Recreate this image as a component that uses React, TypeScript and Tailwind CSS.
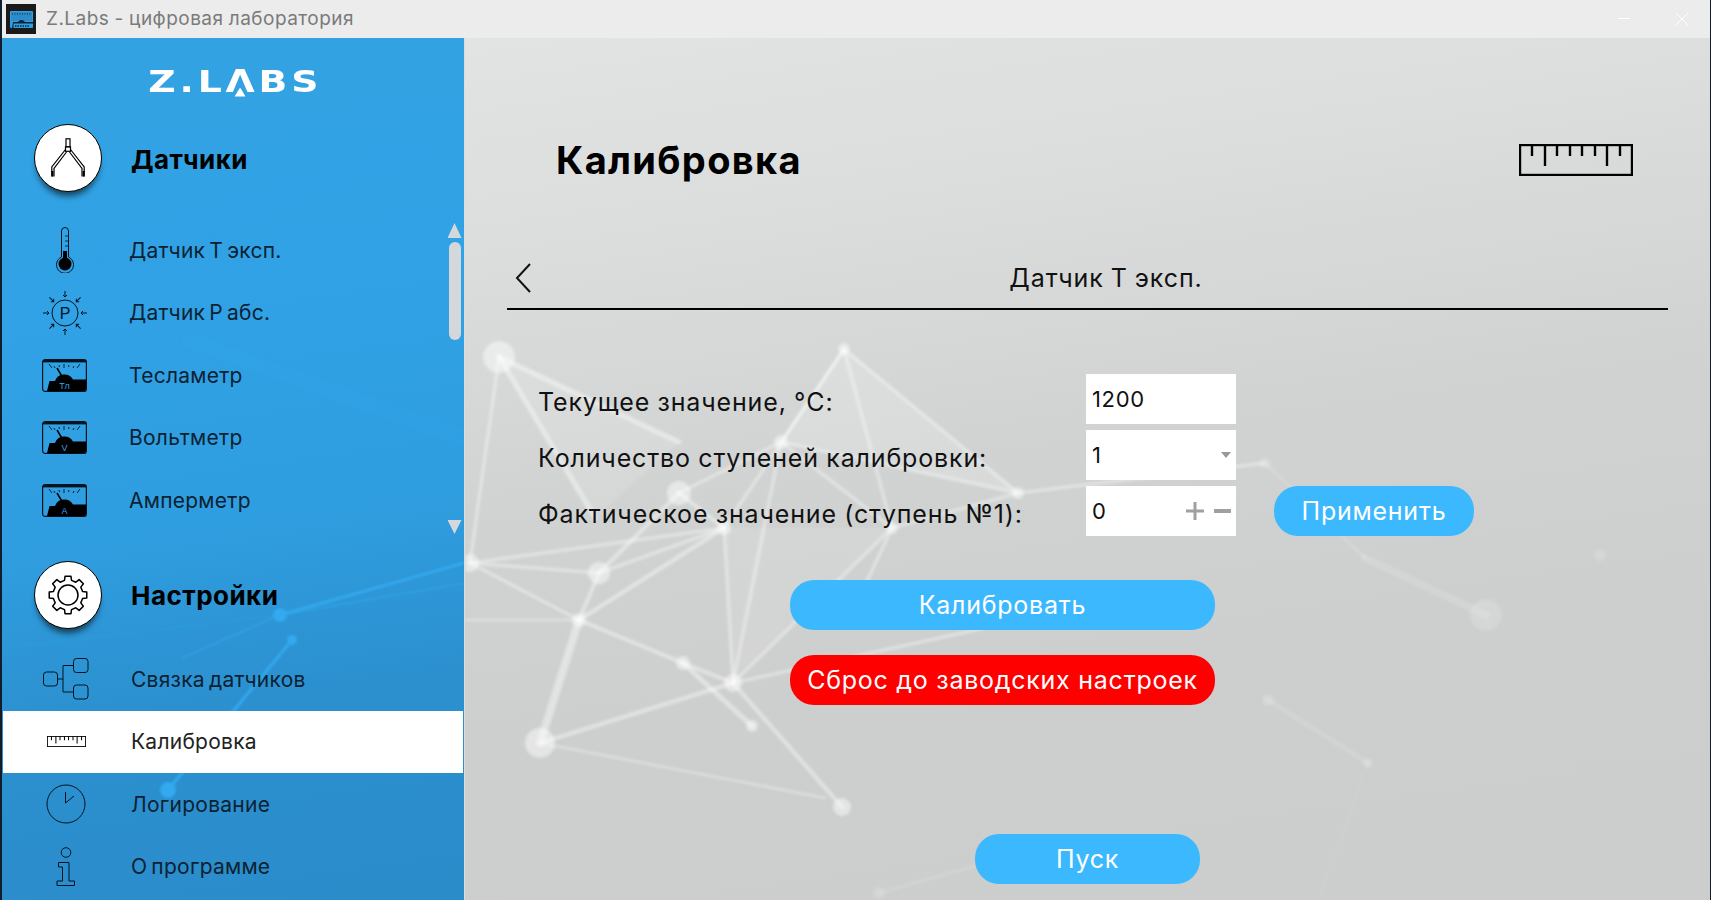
import type { ReactNode } from 'react'

// ---- icons ----

function Ruler({ className, sw = 2.4 }: { className?: string; sw?: number }) {
  const short = [13, 38, 51, 63, 76, 101]
  const long = [26, 88]
  return (
    <svg viewBox="0 0 114 32" className={className} fill="none" stroke="#000" strokeWidth={sw}>
      <rect x="1" y="1" width="112" height="30" />
      {short.map((x) => (
        <line key={x} x1={x} y1="1" x2={x} y2="12" />
      ))}
      {long.map((x) => (
        <line key={x} x1={x} y1="1" x2={x} y2="22" />
      ))}
    </svg>
  )
}

function Meter({ letter }: { letter: string }) {
  const ticks = [
    [7, 5, 10, 9],
    [12, 7, 13, 9],
    [17, 6, 17.5, 8],
    [22, 5, 22, 9],
    [27, 6, 26.5, 8],
    [32, 7, 31, 9],
    [38, 5, 35, 9],
  ]
  return (
    <svg viewBox="0 0 45 33" className="w-[45px] h-[33px]">
      <rect x="0.6" y="0.6" width="43.8" height="31.8" rx="2.5" fill="none" stroke="#04141f" strokeWidth="1.2" />
      <rect x="1" y="1" width="43" height="2.4" fill="#04141f" />
      <path d="M5 32 L7.5 22 H13 A10 10 0 0 1 31 20.5 H44 V30 Q44 32 42 32 Z" fill="#000" />
      {ticks.map(([a, b, c, d], i) => (
        <line key={i} x1={a} y1={b} x2={c} y2={d} stroke="#04141f" strokeWidth="0.9" />
      ))}
      <path d="M15 9 L21 19" stroke="#000" strokeWidth="1.5" />
      <text x="22.5" y="30" textAnchor="middle" fill="#35a5e8" fontSize="9" fontFamily="Liberation Sans, sans-serif">
        {letter}
      </text>
    </svg>
  )
}

function Thermometer() {
  return (
    <svg viewBox="0 0 20 46" className="w-[20px] h-[46px]" fill="none" stroke="#04141f">
      <path d="M6.5 30 V4 A3.5 3.5 0 0 1 13.5 4 V30 A8.5 8.5 0 1 1 6.5 30 Z" strokeWidth="1" />
      <circle cx="10" cy="37" r="6.5" fill="#000" stroke="none" />
      <rect x="8" y="24" width="4" height="10" fill="#000" stroke="none" />
      <path d="M10 9 H13 M10 14 H13 M10 19 H13" strokeWidth="0.8" />
    </svg>
  )
}

function Pressure() {
  const dirs = [0, 45, 90, 135, 180, 225, 270, 315]
  return (
    <svg viewBox="-23 -23 46 46" className="w-[46px] h-[46px]" fill="none" stroke="#04141f" strokeWidth="1">
      <circle r="13" />
      {dirs.map((d) => (
        <g key={d} transform={`rotate(${d})`}>
          <path d="M0 -22 V-16 M-2 -18 L0 -16 L2 -18" />
        </g>
      ))}
      <text y="6" textAnchor="middle" fontSize="16" fill="#04141f" stroke="none" fontFamily="Liberation Sans, sans-serif">
        P
      </text>
    </svg>
  )
}

function Compass() {
  return (
    <svg viewBox="0 0 34 40" className="w-[34px] h-[40px]" fill="none" stroke="#000" strokeWidth="1.2">
      <rect x="15" y="0.8" width="4" height="8" />
      <rect x="14.5" y="8.8" width="5" height="4.5" />
      <path d="M14.5 11.5 L0.8 29 V38.5 M15.5 14 L3 30.5 V38.5" />
      <path d="M19.5 11.5 L33.2 29 V38.5 M18.5 14 L31 30.5 V38.5" />
      <path d="M1.4 33 V38.5 M32.6 33 V38.5" strokeWidth="2" />
    </svg>
  )
}

function gearPath() {
  const teeth = 8
  const pts: string[] = []
  for (let i = 0; i < teeth; i++) {
    const a = (i * 2 * Math.PI) / teeth - Math.PI / 2
    const step = (2 * Math.PI) / teeth
    const seq: [number, number][] = [
      [15, a - step * 0.3],
      [19, a - step * 0.2],
      [19, a + step * 0.2],
      [15, a + step * 0.3],
    ]
    seq.forEach(([r, t]) => pts.push(`${(r * Math.cos(t)).toFixed(2)} ${(r * Math.sin(t)).toFixed(2)}`))
  }
  return 'M' + pts.join(' L') + ' Z'
}

function Gear() {
  return (
    <svg viewBox="-20 -20 40 40" className="w-[40px] h-[40px]" fill="none" stroke="#000" strokeWidth="1.5">
      <path d={gearPath()} strokeLinejoin="round" />
      <circle r="10" />
    </svg>
  )
}

function Flow() {
  return (
    <svg viewBox="0 0 46 42" className="w-[46px] h-[42px]" fill="none" stroke="#04141f" strokeWidth="1">
      <rect x="0.5" y="14" width="14" height="14" rx="3" />
      <rect x="30.5" y="0.5" width="14.5" height="14" rx="3" />
      <rect x="30.5" y="27" width="14.5" height="14" rx="3" />
      <path d="M14.5 21 H20 M20 34 V7.5 H30.5 M20 34 H30.5" />
    </svg>
  )
}

function Clock() {
  return (
    <svg viewBox="0 0 40 40" className="w-[40px] h-[40px]" fill="none" stroke="#04141f" strokeWidth="1">
      <circle cx="20" cy="20" r="19" />
      <path d="M19.5 8 V19 L28 12" />
    </svg>
  )
}

function Info() {
  return (
    <svg viewBox="0 0 20 40" className="w-[20px] h-[40px]" fill="none" stroke="#04141f" strokeWidth="1">
      <circle cx="10" cy="5.5" r="4.8" />
      <path d="M2.5 15.5 H13 V34 H18.5 V38.5 H1 V34 H6.5 V20 H2.5 Z" />
    </svg>
  )
}

function AppIcon() {
  return (
    <div className="w-[30px] h-[30px] bg-[#1a1a1a] flex items-center justify-center">
      <svg viewBox="0 0 23 17" className="w-[23px] h-[17px]">
        <rect x="0" y="0" width="23" height="17" rx="1" fill="#2f9fe2" />
        <rect x="1" y="1" width="21" height="9" fill="#2b8cc9" />
        <path d="M2 3 H21" stroke="#0b2233" strokeDasharray="1 1.5" />
        <path d="M2 17 L3 11 H8 A4 4 0 0 1 15 11 H23 V12.5 H3.5 V17 Z" fill="#0b2233" />
        <path d="M5 15 H19" stroke="#0b2233" strokeDasharray="1.5 1" strokeWidth="1.4" />
      </svg>
    </div>
  )
}

// ---- backgrounds ----

type Pt = [number, number]

// coordinates are screen coordinates minus the panel origin
const mainEdges: [Pt, Pt, number][] = [
  [[34, 319], [214, 404], 5],
  [[34, 319], [5, 525], 3],
  [[34, 319], [130, 480], 5],
  [[379, 311], [316, 404], 3],
  [[379, 311], [553, 455], 3],
  [[379, 311], [427, 490], 3],
  [[379, 311], [259, 490], 3],
  [[316, 404], [553, 455], 3],
  [[316, 404], [214, 455], 3],
  [[316, 404], [427, 490], 3],
  [[214, 455], [259, 490], 4],
  [[214, 455], [134, 535], 4],
  [[553, 455], [427, 490], 3],
  [[553, 455], [800, 425], 3],
  [[259, 490], [5, 525], 3],
  [[259, 490], [134, 535], 3],
  [[259, 490], [268, 645], 3],
  [[259, 490], [114, 582], 4],
  [[316, 404], [268, 645], 3],
  [[427, 490], [268, 645], 3],
  [[427, 490], [380, 590], 3],
  [[5, 525], [134, 535], 3],
  [[5, 525], [114, 582], 3],
  [[134, 535], [114, 582], 4],
  [[114, 582], [218, 625], 4],
  [[114, 582], [-5, 582], 2],
  [[114, 582], [75, 705], 8],
  [[218, 625], [287, 688], 5],
  [[218, 625], [268, 645], 4],
  [[268, 645], [377, 769], 4],
  [[268, 645], [75, 705], 4],
  [[268, 645], [520, 590], 3],
  [[800, 425], [900, 520], 4],
  [[900, 520], [1021, 577], 8],
  [[803, 662], [903, 725], 5],
  [[75, 705], [360, 760], 2],
  [[414, 855], [520, 825], 3],
  [[903, 725], [840, 900], 1],
]
const mainNodes: [number, number, number][] = [
  [34, 319, 16],
  [379, 311, 6],
  [316, 404, 7],
  [214, 455, 12],
  [553, 455, 6],
  [259, 490, 7],
  [427, 490, 6],
  [5, 525, 9],
  [134, 535, 11],
  [114, 582, 7],
  [268, 645, 9],
  [218, 625, 7],
  [287, 688, 6],
  [75, 705, 15],
  [377, 769, 9],
  [414, 855, 6],
  [800, 425, 6],
  [1021, 577, 16],
  [903, 725, 5],
  [803, 662, 6],
  [1135, 517, 6],
]

const isFaint = (x: number, y: number) => x > 700 || y > 800

function MainNetwork() {
  return (
    <svg className="absolute inset-0 w-full h-full blur-[1.4px]" stroke="#fff">
      <polygon points="379,311 316,404 553,455" fill="#fff" fillOpacity="0.18" stroke="none" />
      <polygon points="34,319 214,404 130,480" fill="#fff" fillOpacity="0.12" stroke="none" />
      <polygon points="259,490 268,645 427,490" fill="#fff" fillOpacity="0.1" stroke="none" />
      {mainEdges.map(([a, b, w], i) => (
        <line key={i} x1={a[0]} y1={a[1]} x2={b[0]} y2={b[1]} strokeWidth={w} strokeOpacity={isFaint(a[0], a[1]) ? 0.13 : 0.42} strokeLinecap="round" />
      ))}
      {mainNodes.map(([x, y, r], i) => (
        <circle key={i} cx={x} cy={y} r={r} fill="#fff" stroke="none" fillOpacity={isFaint(x, y) ? 0.16 : 0.46} />
      ))}
    </svg>
  )
}

function SideNetwork() {
  return (
    <svg className="absolute inset-0 w-full h-full blur-[0.8px]" stroke="#33a9ee" fill="#33a9ee">
      <line x1="462" y1="525" x2="278" y2="577" strokeWidth="3" />
      <line x1="278" y1="577" x2="180" y2="620" strokeWidth="2" strokeOpacity="0.5" />
      <line x1="278" y1="577" x2="462" y2="545" strokeWidth="2" strokeOpacity="0.5" />
      <line x1="290" y1="602" x2="166" y2="752" strokeWidth="3" />
      <line x1="278" y1="577" x2="0" y2="610" strokeWidth="1" strokeOpacity="0.4" />
      <line x1="180" y1="300" x2="462" y2="400" strokeWidth="18" strokeOpacity="0.18" />
      <line x1="100" y1="220" x2="462" y2="90" strokeWidth="30" strokeOpacity="0.08" />
      <circle cx="278" cy="577" r="7" stroke="none" />
      <circle cx="290" cy="602" r="5" stroke="none" />
      <circle cx="166" cy="752" r="8" stroke="none" />
    </svg>
  )
}

// ---- sidebar ----

function Row({ icon, label, active, lower }: { icon: ReactNode; label: string; active?: boolean; lower?: boolean }) {
  return (
    <div className={`flex items-center h-[62.5px] pr-2 ${active ? 'bg-white mx-px text-[#222]' : 'text-[#0c2233]'}`}>
      <div className={`flex justify-center pr-[2px] ${active ? 'w-[128px]' : lower ? 'w-[129px]' : 'w-[127px]'}`}>{icon}</div>
      <span className="text-[21px] tracking-[0.012em] [word-spacing:-0.1em]">{label}</span>
    </div>
  )
}

function Header({ icon, label }: { icon: ReactNode; label: string }) {
  return (
    <div className="flex items-center pl-[32px] h-[68px]">
      <div className="w-[68px] h-[68px] rounded-full bg-white border-[1.5px] border-black flex items-center justify-center shadow-[0_7px_6px_-3px_rgba(0,0,0,0.6)]">
        {icon}
      </div>
      <span className="ml-[29px] pt-[2px] text-[26px] font-bold text-black tracking-[0.018em]">{label}</span>
    </div>
  )
}

function Sidebar() {
  return (
    <aside className="relative w-[462px] shrink-0 overflow-hidden flex flex-col bg-[linear-gradient(172deg,#33a2e2_0%,#30a2e5_30%,#2f9ee0_55%,#2c90cf_75%,#2b8cca_100%)]">
      <SideNetwork />
      <div className="relative flex flex-col">
        <div className="h-[86px] flex items-center justify-center pl-[4px]">
          <span className="text-white font-bold text-[31px] leading-none tracking-[0.1em] scale-x-[1.22] font-['DejaVu_Sans',sans-serif]">
            Z.L
            <span className="relative">
              Λ
              <span className="absolute left-[44%] -translate-x-1/2 bottom-[2px] w-[9px] h-[9px] bg-white [clip-path:polygon(50%_0,100%_100%,0_100%)]" />
            </span>
            BS
          </span>
        </div>
        <Header icon={<Compass />} label="Датчики" />
        <div className="flex mt-[27px]">
          <div className="flex-1">
            <Row icon={<Thermometer />} label="Датчик Т эксп." />
            <Row icon={<Pressure />} label="Датчик Р абс." />
            <Row icon={<Meter letter="Tл" />} label="Тесламетр" />
            <Row icon={<Meter letter="V" />} label="Вольтметр" />
            <Row icon={<Meter letter="A" />} label="Амперметр" />
          </div>
          <div className="w-[15px] mr-[2px] flex flex-col items-center pt-[4px]">
            <div className="w-[14px] h-[15px] bg-[#d5d8da] [clip-path:polygon(50%_0,100%_100%,0_100%)]" />
            <div className="w-[12px] h-[98px] mt-[4px] rounded-full bg-[#d5d8da]" />
            <div className="w-[14px] h-[14px] mt-[180px] bg-[#d5d8da] [clip-path:polygon(0_0,100%_0,50%_100%)]" />
          </div>
        </div>
        <div className="mt-[26.5px]">
          <Header icon={<Gear />} label="Настройки" />
        </div>
        <div className="mt-[19.5px]">
          <Row lower icon={<Flow />} label="Связка датчиков" />
          <Row lower icon={<Ruler className="w-[39px] h-[11px]" sw={3} />} label="Калибровка" active />
          <Row lower icon={<Clock />} label="Логирование" />
          <Row lower icon={<Info />} label="О программе" />
        </div>
      </div>
    </aside>
  )
}

// ---- main panel ----

function Field({ children }: { children: ReactNode }) {
  return <div className="relative w-[150px] h-[50px] bg-white flex items-start pl-[6px] pt-[9px] text-[22px] tracking-[0.03em] text-[#111]">{children}</div>
}

function Label({ children }: { children: ReactNode }) {
  return <div className="w-[579px] h-[50px] pl-[31px] pt-[10px] text-[25px] tracking-[0.034em] [word-spacing:-0.02em] text-[#111]">{children}</div>
}

const pill = 'h-[50px] rounded-[24px] flex items-center justify-center pt-px text-white text-[25px] tracking-[0.03em]'

function Main() {
  return (
    <main className="relative flex-1 overflow-hidden border-l border-[#d9dde0] bg-[linear-gradient(172deg,#e2e3e3_0%,#dbdddd_22%,#d1d3d3_46%,#cdcfce_68%,#cccecd_100%)]">
      <MainNetwork />
      <div className="relative flex flex-col px-[42px]">
        <div className="flex items-center justify-between h-[60px] mt-[92px] pl-[49px] pr-[35px]">
          <h1 className="text-[38px] font-bold text-black tracking-[0.035em]">Калибровка</h1>
          <Ruler className="w-[114px] h-[32px]" />
        </div>
        <div className="relative flex items-center justify-center h-[62px] mt-[58px] pl-[37px] border-b-2 border-black">
          <svg viewBox="0 0 16 30" className="absolute left-[8px] top-[15px] w-[16px] h-[30px]" fill="none" stroke="#111" strokeWidth="2">
            <path d="M15 1 L2 15 L15 29" />
          </svg>
          <span className="text-[25px] tracking-[0.037em] [word-spacing:-0.04em] text-[#111] pt-px">Датчик Т эксп.</span>
        </div>
        <div className="flex flex-col gap-[6px] mt-[64px]">
          <div className="flex">
            <Label>Текущее значение, °C:</Label>
            <Field>1200</Field>
          </div>
          <div className="flex">
            <Label>Количество ступеней калибровки:</Label>
            <Field>
              1
              <div className="absolute right-[5px] top-[22px] w-[10px] h-[6px] bg-[#999] [clip-path:polygon(0_0,100%_0,50%_100%)]" />
            </Field>
          </div>
          <div className="flex">
            <Label>Фактическое значение (ступень №1):</Label>
            <Field>
              0
              <div className="absolute right-[5px] top-[16px] flex items-center gap-[10px]">
                <svg viewBox="0 0 18 18" className="w-[18px] h-[18px]" stroke="#a0a0a0" strokeWidth="3">
                  <path d="M0 9 H18 M9 0 V18" />
                </svg>
                <div className="w-[17px] h-[4px] bg-[#a0a0a0]" />
              </div>
            </Field>
            <button className={`${pill} w-[200px] ml-[38px] bg-[#3cb8ff]`}>Применить</button>
          </div>
        </div>
        <div className="flex flex-col gap-[25px] mt-[44px] ml-[283px] w-[425px]">
          <button className={`${pill} bg-[#3cb8ff]`}>Калибровать</button>
          <button className={`${pill} bg-[#ff0000]`}>Сброс до заводских настроек</button>
        </div>
        <button className={`${pill} w-[225px] mt-[129px] ml-[468px] bg-[#3cb8ff]`}>Пуск</button>
      </div>
    </main>
  )
}

export default function App() {
  return (
    <div className="w-[1711px] h-[900px] overflow-hidden bg-[#0f1e2a] pl-[2px] pr-px flex flex-col font-['Inter',sans-serif]">
      <header className="h-[38px] shrink-0 bg-[#ececec] flex items-center pl-[4px] pr-[22px]">
        <AppIcon />
        <span className="ml-[10px] text-[19px] tracking-[0.025em] [word-spacing:-0.03em] text-[#7a7a7a]">Z.Labs - цифровая лаборатория</span>
        <svg viewBox="0 0 70 14" className="ml-auto w-[70px] h-[14px]" stroke="#fff" fill="none">
          <path d="M0 6.5 H12 M58 1 L70 13 M70 1 L58 13" />
        </svg>
      </header>
      <div className="flex flex-1 min-h-0">
        <Sidebar />
        <Main />
      </div>
    </div>
  )
}
